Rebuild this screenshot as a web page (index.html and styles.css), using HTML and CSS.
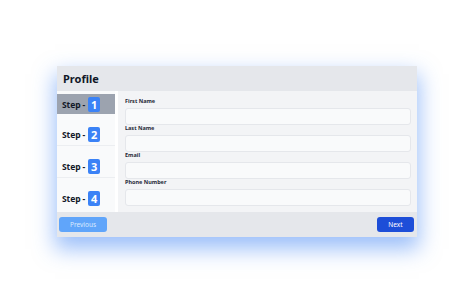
FILE: index.html
```html
<!DOCTYPE html>
<html>
<head>
<meta charset="utf-8">
<link rel="stylesheet" href="styles.css">
</head>
<body>
<div class="card">
  <div class="card-header">Profile</div>
  <div class="card-body">
    <div class="steps">
      <div class="step active"><span class="step-label">Step -</span><span class="badge">1</span></div>
      <div class="step"><span class="step-label">Step -</span><span class="badge">2</span></div>
      <div class="step"><span class="step-label">Step -</span><span class="badge">3</span></div>
      <div class="step last"><span class="step-label">Step -</span><span class="badge">4</span></div>
    </div>
    <div class="form">
      <div class="field"><label class="label">First Name</label><div class="input"></div></div>
      <div class="field"><label class="label">Last Name</label><div class="input"></div></div>
      <div class="field"><label class="label">Email</label><div class="input"></div></div>
      <div class="field"><label class="label">Phone Number</label><div class="input"></div></div>
    </div>
  </div>
  <div class="card-footer">
    <button class="btn btn-prev">Previous</button>
    <button class="btn btn-next">Next</button>
  </div>
</div>
</body>
</html>
```
FILE: styles.css
```css
* { box-sizing: border-box; }
html, body { margin: 0; padding: 0; }
body {
  width: 474px;
  height: 303px;
  background: #ffffff;
  display: flex;
  align-items: center;
  justify-content: center;
  font-family: "Noto Sans", "Open Sans", sans-serif;
  color: #1f2937;
}
.card {
  width: 360px;
  background: #f3f4f6;
  display: flex;
  flex-direction: column;
  box-shadow: 0 10px 20px 2px rgba(59, 130, 246, 0.5);
}
.card-header {
  height: 25px;
  background: #e5e7eb;
  padding: 0 6px;
  display: flex;
  align-items: center;
  font-size: 11px;
  font-weight: 700;
  color: #111827;
}
.card-body {
  display: flex;
  height: 121px;
}
.steps {
  width: 61px;
  background: #f9fafb;
  border-right: 3px solid #ffffff;
  padding-top: 3px;
  display: flex;
  flex-direction: column;
}
.step {
  height: 32px;
  padding-top: 13px;
  padding-left: 5px;
  display: flex;
  align-items: flex-start;
  border-bottom: 1px solid #eceef1;
}
.step.active {
  height: 20px;
  padding-top: 0;
  align-items: center;
  background: #9ca3af;
  border-bottom: none;
}
.step.last { border-bottom: none; }
.step-label {
  font-size: 8.5px;
  font-weight: 700;
  color: #111827;
  line-height: 15px;
  margin-right: 3px;
  letter-spacing: -0.1px;
}
.badge {
  width: 12px;
  height: 15px;
  border-radius: 2px;
  background: #3b82f6;
  color: #ffffff;
  font-size: 11px;
  font-weight: 700;
  line-height: 15px;
  text-align: center;
}
.form {
  flex: 1;
  padding: 7px 6px 0 7px;
  display: flex;
  flex-direction: column;
}
.field {
  display: flex;
  flex-direction: column;
}
.label {
  font-size: 5.5px;
  font-weight: 700;
  line-height: 7px;
  color: #1f2937;
  margin-bottom: 3px;
}
.input {
  height: 17px;
  background: #f9fafb;
  border: 1px solid #e5e7eb;
  border-radius: 3px;
}
.card-footer {
  height: 25px;
  background: #e5e7eb;
  padding: 0 3px 0 2px;
  display: flex;
  align-items: center;
  justify-content: space-between;
}
.btn {
  border: none;
  height: 15px;
  border-radius: 3px;
  color: #ffffff;
  font-family: "Noto Sans", "Open Sans", sans-serif;
  font-size: 6.5px;
  padding: 0;
}
.btn-prev {
  width: 48px;
  background: #60a5fa;
  color: #dbeafe;
}
.btn-next {
  width: 37px;
  background: #1d4ed8;
}
```
